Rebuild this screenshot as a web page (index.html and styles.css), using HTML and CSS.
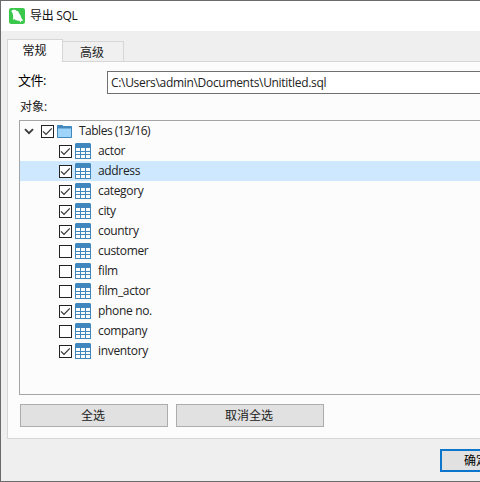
FILE: index.html
```
<!DOCTYPE html>
<html lang="zh-CN">
<head>
<meta charset="utf-8">
<title>导出 SQL</title>
<link rel="stylesheet" href="styles.css">
</head>
<body>
<svg class="defs" width="0" height="0" aria-hidden="true">
  <symbol id="table" viewBox="0 0 16 16">
    <path d="M1 0h14l1 1v15H0V1z" fill="#3f87bd"/>
    <path d="M1 5h4v3H1zM6 5h4v3H6zM11 5h4v3h-4zM1 9h4v2H1zM6 9h4v2H6zM11 9h4v2h-4zM1 12h4v3H1zM6 12h4v3H6zM11 12h4v3h-4z" fill="#fff"/>
  </symbol>
  <symbol id="tick" viewBox="0 0 13 13">
    <path d="M2 6.400l3 3 5.800-6" fill="none" stroke="#333" stroke-width="1.200"/>
  </symbol>
</svg>
<div class="window">
  <header class="titlebar">
    <svg class="logo" viewBox="0 0 16 16"><rect width="16" height="16" rx="2.2" fill="#3bc74c"/><path d="M3.200 2.200C5 1.500 6.800 2 7.800 3L9.600 3.400 9.800 5C11.400 6.600 12 8.200 12.300 10L14.300 12.600 12.500 12.700 11.600 14.600 10.400 12.700C8.600 12.800 6.900 12.200 5.700 11.200L4 11.700 4.200 9.200C4 7.400 4 6 3.400 4.800L2.200 3.200Z" fill="#fff"/></svg>
    <span>导出 SQL</span>
  </header>
  <nav class="tabs">
    <div class="tab active">常规</div>
    <div class="tab">高级</div>
  </nav>
  <main class="panel">
    <div class="file-row"><label>文件:</label><div class="field">C:\Users\admin\Documents\Unititled.sql</div></div>
    <div class="objects">对象:</div>
    <div class="tree">
      <div class="row root">
        <svg class="chevron" viewBox="0 0 10 7"><path d="M1 1.200l4 4 4-4" fill="none" stroke="#3c3c3c" stroke-width="1.900"/></svg>
        <span class="check"><svg><use href="#tick"/></svg></span>
        <svg class="folder" viewBox="0 0 15 13"><path d="M.5 12.500V.5h5l1 1h8v11z" fill="#4489bd" stroke="#3f87bd"/><path d="M1 3.500h13V12H1z" fill="#9fd4fa"/></svg>
        <span class="name">Tables (13/16)</span>
      </div>
      <div class="row"><span class="check"><svg><use href="#tick"/></svg></span><svg class="icon"><use href="#table"/></svg><span class="name">actor</span></div>
      <div class="row selected"><span class="check"><svg><use href="#tick"/></svg></span><svg class="icon"><use href="#table"/></svg><span class="name">address</span></div>
      <div class="row"><span class="check"><svg><use href="#tick"/></svg></span><svg class="icon"><use href="#table"/></svg><span class="name">category</span></div>
      <div class="row"><span class="check"><svg><use href="#tick"/></svg></span><svg class="icon"><use href="#table"/></svg><span class="name">city</span></div>
      <div class="row"><span class="check"><svg><use href="#tick"/></svg></span><svg class="icon"><use href="#table"/></svg><span class="name">country</span></div>
      <div class="row"><span class="check"></span><svg class="icon"><use href="#table"/></svg><span class="name">customer</span></div>
      <div class="row"><span class="check"></span><svg class="icon"><use href="#table"/></svg><span class="name">film</span></div>
      <div class="row"><span class="check"></span><svg class="icon"><use href="#table"/></svg><span class="name">film_actor</span></div>
      <div class="row"><span class="check"><svg><use href="#tick"/></svg></span><svg class="icon"><use href="#table"/></svg><span class="name">phone no.</span></div>
      <div class="row"><span class="check"></span><svg class="icon"><use href="#table"/></svg><span class="name">company</span></div>
      <div class="row"><span class="check"><svg><use href="#tick"/></svg></span><svg class="icon"><use href="#table"/></svg><span class="name">inventory</span></div>
    </div>
    <div class="actions"><div class="button">全选</div><div class="button">取消全选</div></div>
  </main>
  <footer class="footer"><div class="button primary">确定</div></footer>
</div>
</body>
</html>
```
FILE: styles.css
```
* { box-sizing: border-box; }
body { margin: 0; overflow: hidden; font-family: "Open Sans", "Noto Sans CJK SC", sans-serif; font-size: 12px; color: #222; }
.defs { display: block; }
.window { width: 480px; height: 482px; overflow: hidden; background: #efefef; border: 1px solid #6b6b6b; border-right: 0; }
.titlebar { height: 30px; background: #fff; display: flex; align-items: center; padding-left: 8px; gap: 5px; line-height: 18px; color: #111; }
.logo { width: 16px; height: 16px; }
.titlebar span { letter-spacing: -0.3px; white-space: nowrap; }
.tabs { height: 30px; padding: 8px 0 0 6px; display: flex; align-items: flex-end; }
.tab { height: 20px; width: 61px; border: 1px solid #d6d6d6; border-left: 0; border-bottom: 0; background: #f0f0f0; text-align: center; line-height: 21px; padding-right: 2px; }
.tab.active { width: 56px; height: 23px; margin-bottom: -1px; border-left: 1px solid #d6d6d6; background: #fcfcfc; position: relative; z-index: 1; line-height: 21px; padding-right: 1px; color: #111; }
.panel { margin-left: 6px; height: 378px; background: #fcfcfc; border: 1px solid #d6d6d6; border-right: 0; padding: 9px 0 0 11px; }
.file-row { display: flex; height: 23px; }
.file-row label { width: 89px; margin-left: -1px; line-height: 19px; font-size: 13px; color: #000; letter-spacing: -0.5px; }
.field { flex: 1; border: 1px solid #707070; border-right: 0; background: #fff; padding-left: 3px; line-height: 21px; color: #222; white-space: nowrap; letter-spacing: -0.31px; }
.objects { height: 26px; line-height: 26px; padding-left: 1px; }
.tree { height: 275px; border: 1px solid #a5a5a5; border-right: 0; }
.row { height: 20px; display: flex; align-items: center; padding-left: 39px; }
.row.root { padding-left: 4px; }
.row.selected { background: #cde8ff; }
.chevron { width: 10px; height: 7px; margin-right: 7px; }
.check { width: 13px; height: 13px; border: 1px solid #222; background: #fff; }
.check svg { display: block; width: 13px; height: 13px; margin: -1px; }
.icon { width: 16px; height: 16px; margin: 0 7px 0 3px; }
.folder { width: 15px; height: 13px; margin: 0 7px 0 3px; }
.name { line-height: 18px; white-space: nowrap; letter-spacing: -0.33px; }
.root .name { letter-spacing: -0.5px; }
.actions { display: flex; gap: 8px; padding: 9px 0 0 1px; }
.button { width: 148px; height: 23px; border: 1px solid #adadad; background: #e1e1e1; text-align: center; line-height: 21px; padding-right: 2px; white-space: nowrap; }
.footer { display: flex; padding: 10px 0 0 439px; }
.button.primary { flex: none; width: 74px; border: 2px solid #0c76cc; line-height: 19px; color: #000; }
```
